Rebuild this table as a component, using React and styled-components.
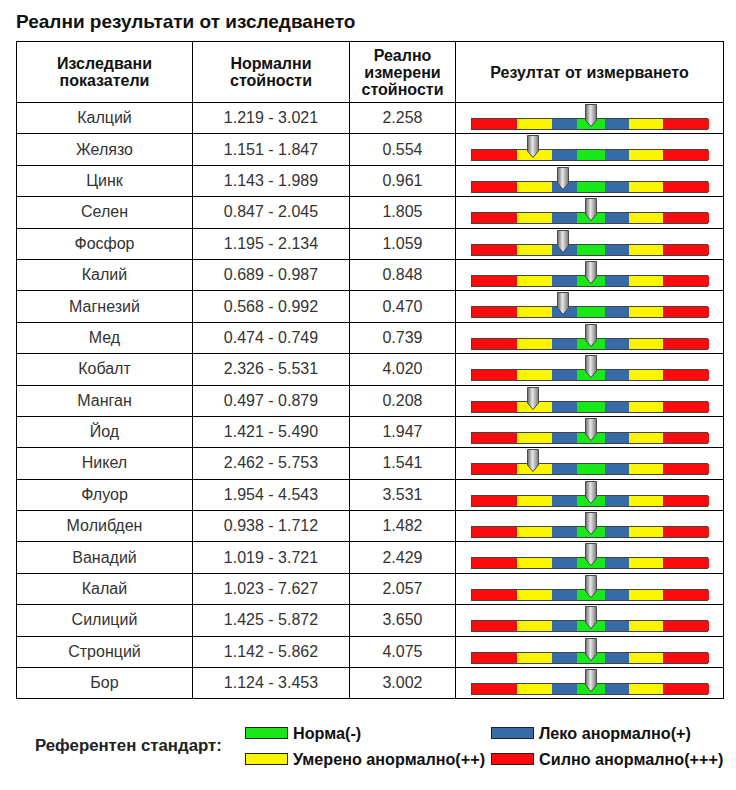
import React from 'react'
import styled, { createGlobalStyle } from 'styled-components'

const GlobalStyle = createGlobalStyle`
  body {
    margin: 0;
    background: #fff;
    font-family: "Liberation Sans", Arial, sans-serif;
    color: #222;
  }
`

const Page = styled.div`
  width: 736px;
  padding: 12px 0 0 16px;
  box-sizing: border-box;
`

const Title = styled.h1`
  margin: 0 0 9px;
  font-size: 19px;
  line-height: 20px;
  font-weight: bold;
  color: #111;
`

const Table = styled.table`
  border-collapse: collapse;
  table-layout: fixed;
  width: 707px;
`

const Col = styled.col`
  width: ${p => p.w}px;
`

const Th = styled.th`
  height: 60px;
  border: 1px solid #000;
  padding: 0;
  font-size: 16px;
  line-height: 17px;
  font-weight: bold;
  color: #111;
  text-align: center;
  vertical-align: middle;
`

const Row = styled.tr`
  height: 31.4px;
`

const Td = styled.td`
  border: 1px solid #000;
  padding: 0;
  font-size: 16px;
  color: #333;
  text-align: center;
  vertical-align: middle;
`

const ScaleCell = styled.td`
  border: 1px solid #000;
  padding: 0;
  vertical-align: top;
`

const ScaleWrap = styled.div`
  position: relative;
  width: 237px;
  height: 30px;
  margin: 0 auto;
`

const Bar = styled.div`
  position: absolute;
  left: 0;
  right: 0;
  top: 15px;
  height: 12px;
  display: flex;
  border: 1px solid #444;
  box-sizing: border-box;
`

const Segment = styled.div`
  width: ${p => p.w}px;
  background: ${p => p.c};
  flex: none;
`

const Marker = styled.svg`
  position: absolute;
  top: 1px;
  width: 12px;
  height: 23px;
`

const Legend = styled.div`
  display: grid;
  grid-template-columns: 210px 246px auto;
  grid-template-rows: 26px 26px;
  align-items: center;
  margin-top: 21px;
  padding-left: 19px;
`

const LegendLabel = styled.div`
  grid-row: 1 / span 2;
  font-size: 16.8px;
  font-weight: bold;
  color: #222;
`

const LegendItem = styled.div`
  display: flex;
  align-items: center;
  gap: 5px;
  font-size: 16.2px;
  font-weight: bold;
  color: #111;
  white-space: nowrap;
`

const Swatch = styled.span`
  width: 43px;
  height: 12px;
  box-sizing: border-box;
  border: 1px solid #222;
  background: ${p => p.c};
`

const RED = '#fa0a0a'
const YELLOW = '#fbf500'
const BLUE = '#366ba8'
const GREEN = '#18e818'

const segments = [
  [45, RED], [35, YELLOW], [25, BLUE], [28, GREEN], [24, BLUE], [34, YELLOW], [46, RED]
]

const rows = [
  ['Калций', '1.219 - 3.021', '2.258', 120],
  ['Желязо', '1.151 - 1.847', '0.554', 62],
  ['Цинк', '1.143 - 1.989', '0.961', 92],
  ['Селен', '0.847 - 2.045', '1.805', 120],
  ['Фосфор', '1.195 - 2.134', '1.059', 92],
  ['Калий', '0.689 - 0.987', '0.848', 120],
  ['Магнезий', '0.568 - 0.992', '0.470', 92],
  ['Мед', '0.474 - 0.749', '0.739', 120],
  ['Кобалт', '2.326 - 5.531', '4.020', 120],
  ['Манган', '0.497 - 0.879', '0.208', 62],
  ['Йод', '1.421 - 5.490', '1.947', 120],
  ['Никел', '2.462 - 5.753', '1.541', 62],
  ['Флуор', '1.954 - 4.543', '3.531', 120],
  ['Молибден', '0.938 - 1.712', '1.482', 120],
  ['Ванадий', '1.019 - 3.721', '2.429', 120],
  ['Калай', '1.023 - 7.627', '2.057', 120],
  ['Силиций', '1.425 - 5.872', '3.650', 120],
  ['Стронций', '1.142 - 5.862', '4.075', 120],
  ['Бор', '1.124 - 3.453', '3.002', 120],
]

const Pointer = ({ at, id }) => (
  <Marker viewBox="0 0 12 23" style={{ left: at - 6 }}>
    <defs>
      <linearGradient id={id} x1="0" x2="1" y1="0" y2="0">
        <stop offset="0" stopColor="#6a6a6a" />
        <stop offset="0.45" stopColor="#e6e6e6" />
        <stop offset="1" stopColor="#767676" />
      </linearGradient>
    </defs>
    <path d="M0.5 0.5 H11.5 V16 L6 22.5 L0.5 16 Z" fill={`url(#${id})`} stroke="#4a4a4a" strokeWidth="1" />
  </Marker>
)

const Scale = ({ at, id }) => (
  <ScaleWrap>
    <Bar>
      {segments.map(([w, c], i) => <Segment key={i} w={w} c={c} />)}
    </Bar>
    <Pointer at={at} id={id} />
  </ScaleWrap>
)

const App = () => {
  return (
    <>
      <GlobalStyle />
      <Page>
        <Title>Реални результати от изследването</Title>
        <Table>
          <colgroup>
            <Col w={176} />
            <Col w={157} />
            <Col w={106} />
            <Col w={268} />
          </colgroup>
          <thead>
            <tr>
              <Th>Изследвани<br />показатели</Th>
              <Th>Нормални<br />стойности</Th>
              <Th>Реално<br />измерени<br />стойности</Th>
              <Th>Резултат от измерването</Th>
            </tr>
          </thead>
          <tbody>
            {rows.map(([name, range, value, at], i) => (
              <Row key={name}>
                <Td>{name}</Td>
                <Td>{range}</Td>
                <Td>{value}</Td>
                <ScaleCell>
                  <Scale at={at} id={`g${i}`} />
                </ScaleCell>
              </Row>
            ))}
          </tbody>
        </Table>
        <Legend>
          <LegendLabel>Референтен стандарт:</LegendLabel>
          <LegendItem><Swatch c={GREEN} />Норма(-)</LegendItem>
          <LegendItem><Swatch c={BLUE} />Леко анормално(+)</LegendItem>
          <LegendItem><Swatch c={YELLOW} />Умерено анормално(++)</LegendItem>
          <LegendItem><Swatch c={RED} />Силно анормално(+++)</LegendItem>
        </Legend>
      </Page>
    </>
  )
}

export default App
